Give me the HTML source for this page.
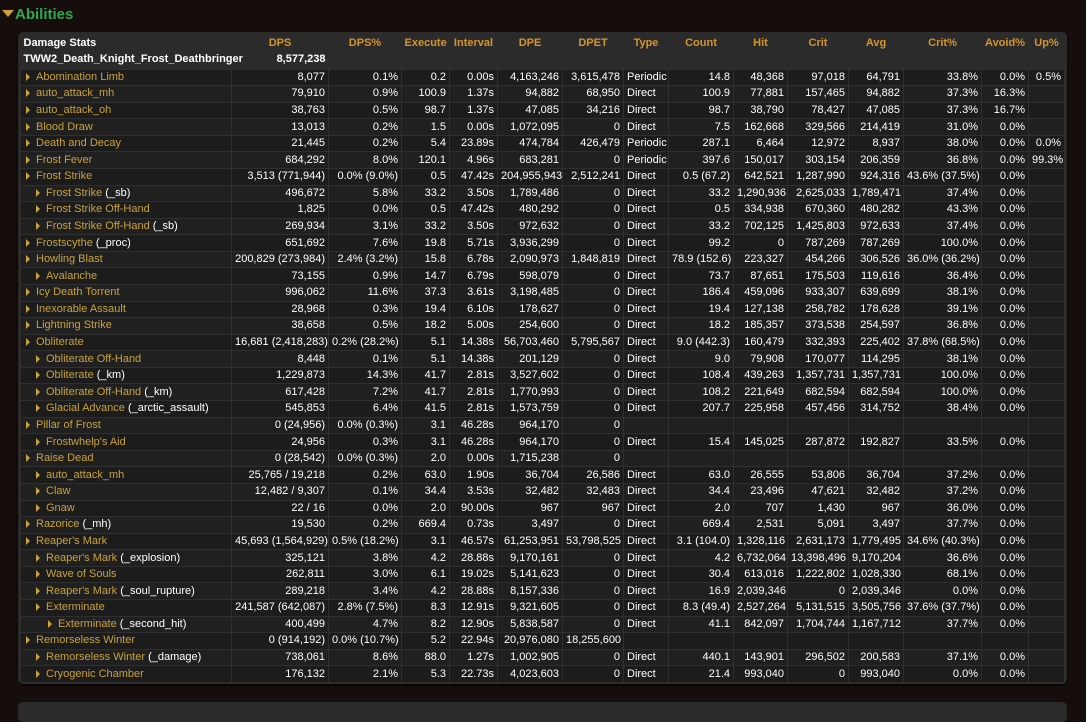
<!DOCTYPE html>
<html><head><meta charset="utf-8"><style>
body{margin:0;background:#160e0c;width:1086px;height:705px;overflow:hidden;font-family:"Liberation Sans",Arial,sans-serif;font-size:11px;color:#fff}
h2{position:absolute;left:2px;top:6px;margin:0;font-size:15px;font-weight:bold;color:#2fa84f}
h2 .tri{display:inline-block;width:0;height:0;border-top:7px solid #c9a23a;border-left:6px solid transparent;border-right:6px solid transparent;margin-right:1px;vertical-align:2px}
.panel{position:absolute;left:18px;top:32px;width:1049px;height:652px;background:#2b2b2b;border-radius:5px;box-shadow:0 1px 2px #000}
.panel2{position:absolute;left:18px;top:702px;width:1049px;height:20px;background:#2b2b2b;border-radius:5px}
table{position:absolute;left:2px;top:3px;border-collapse:collapse;table-layout:fixed;width:1044px}
td,th{padding:0 3px;height:16.58px;line-height:15px;white-space:nowrap;overflow:hidden;text-align:right;box-sizing:border-box}
th{color:#d4952b;font-weight:bold;height:16px;padding-bottom:0}
tbody td{border:1px solid #2f2f2f}
tbody tr:nth-child(odd){background:#1c1c1c}
tbody tr:nth-child(even){background:#202020}
td.n{text-align:left;color:#c9a23a}
td.n i{font-style:normal;color:#fff}
.a{display:inline-block;width:0;height:0;border-left:4px solid #c9a23a;border-top:4px solid transparent;border-bottom:4px solid transparent;margin:0 6px 0 2px;vertical-align:-1px}
.l1{padding-left:13px}.l2{padding-left:25px}
td.t{text-align:left}
.hd td{border:none;font-weight:bold}
</style></head><body>
<h2><span class="tri"></span>Abilities</h2>
<div class="panel">
<table>
<colgroup><col style="width:211px"><col style="width:97px"><col style="width:73px"><col style="width:48px"><col style="width:48px"><col style="width:65px"><col style="width:61px"><col style="width:45px"><col style="width:65px"><col style="width:54px"><col style="width:61px"><col style="width:55px"><col style="width:78px"><col style="width:47px"><col style="width:36px"></colgroup>
<thead>
<tr><th style="text-align:left;color:#fff">Damage Stats</th><th style="text-align:center">DPS</th><th style="text-align:center">DPS%</th><th style="text-align:center">Execute</th><th style="text-align:center">Interval</th><th style="text-align:center">DPE</th><th style="text-align:center">DPET</th><th style="text-align:center">Type</th><th style="text-align:center">Count</th><th style="text-align:center">Hit</th><th style="text-align:center">Crit</th><th style="text-align:center">Avg</th><th style="text-align:center">Crit%</th><th style="text-align:center">Avoid%</th><th style="text-align:center">Up%</th></tr>
<tr class="hd"><td colspan="1" style="text-align:left;padding-left:3px;overflow:visible">TWW2_Death_Knight_Frost_Deathbringer</td><td>8,577,238</td><td colspan="13" style="height:18px"></td></tr>
</thead>
<tbody>
<tr><td class="n"><span class="a"></span>Abomination Limb</td><td>8,077</td><td>0.1%</td><td>0.2</td><td>0.00s</td><td>4,163,246</td><td>3,615,478</td><td class="t">Periodic</td><td>14.8</td><td>48,368</td><td>97,018</td><td>64,791</td><td>33.8%</td><td>0.0%</td><td>0.5%</td></tr>
<tr><td class="n"><span class="a"></span>auto_attack_mh</td><td>79,910</td><td>0.9%</td><td>100.9</td><td>1.37s</td><td>94,882</td><td>68,950</td><td class="t">Direct</td><td>100.9</td><td>77,881</td><td>157,465</td><td>94,882</td><td>37.3%</td><td>16.3%</td><td></td></tr>
<tr><td class="n"><span class="a"></span>auto_attack_oh</td><td>38,763</td><td>0.5%</td><td>98.7</td><td>1.37s</td><td>47,085</td><td>34,216</td><td class="t">Direct</td><td>98.7</td><td>38,790</td><td>78,427</td><td>47,085</td><td>37.3%</td><td>16.7%</td><td></td></tr>
<tr><td class="n"><span class="a"></span>Blood Draw</td><td>13,013</td><td>0.2%</td><td>1.5</td><td>0.00s</td><td>1,072,095</td><td>0</td><td class="t">Direct</td><td>7.5</td><td>162,668</td><td>329,566</td><td>214,419</td><td>31.0%</td><td>0.0%</td><td></td></tr>
<tr><td class="n"><span class="a"></span>Death and Decay</td><td>21,445</td><td>0.2%</td><td>5.4</td><td>23.89s</td><td>474,784</td><td>426,479</td><td class="t">Periodic</td><td>287.1</td><td>6,464</td><td>12,972</td><td>8,937</td><td>38.0%</td><td>0.0%</td><td>0.0%</td></tr>
<tr><td class="n"><span class="a"></span>Frost Fever</td><td>684,292</td><td>8.0%</td><td>120.1</td><td>4.96s</td><td>683,281</td><td>0</td><td class="t">Periodic</td><td>397.6</td><td>150,017</td><td>303,154</td><td>206,359</td><td>36.8%</td><td>0.0%</td><td>99.3%</td></tr>
<tr><td class="n"><span class="a"></span>Frost Strike</td><td>3,513 (771,944)</td><td>0.0% (9.0%)</td><td>0.5</td><td>47.42s</td><td>204,955,943</td><td>2,512,241</td><td class="t">Direct</td><td>0.5 (67.2)</td><td>642,521</td><td>1,287,990</td><td>924,316</td><td>43.6% (37.5%)</td><td>0.0%</td><td></td></tr>
<tr><td class="n l1"><span class="a"></span>Frost Strike <i>(_sb)</i></td><td>496,672</td><td>5.8%</td><td>33.2</td><td>3.50s</td><td>1,789,486</td><td>0</td><td class="t">Direct</td><td>33.2</td><td>1,290,936</td><td>2,625,033</td><td>1,789,471</td><td>37.4%</td><td>0.0%</td><td></td></tr>
<tr><td class="n l1"><span class="a"></span>Frost Strike Off-Hand</td><td>1,825</td><td>0.0%</td><td>0.5</td><td>47.42s</td><td>480,292</td><td>0</td><td class="t">Direct</td><td>0.5</td><td>334,938</td><td>670,360</td><td>480,282</td><td>43.3%</td><td>0.0%</td><td></td></tr>
<tr><td class="n l1"><span class="a"></span>Frost Strike Off-Hand <i>(_sb)</i></td><td>269,934</td><td>3.1%</td><td>33.2</td><td>3.50s</td><td>972,632</td><td>0</td><td class="t">Direct</td><td>33.2</td><td>702,125</td><td>1,425,803</td><td>972,633</td><td>37.4%</td><td>0.0%</td><td></td></tr>
<tr><td class="n"><span class="a"></span>Frostscythe <i>(_proc)</i></td><td>651,692</td><td>7.6%</td><td>19.8</td><td>5.71s</td><td>3,936,299</td><td>0</td><td class="t">Direct</td><td>99.2</td><td>0</td><td>787,269</td><td>787,269</td><td>100.0%</td><td>0.0%</td><td></td></tr>
<tr><td class="n"><span class="a"></span>Howling Blast</td><td>200,829 (273,984)</td><td>2.4% (3.2%)</td><td>15.8</td><td>6.78s</td><td>2,090,973</td><td>1,848,819</td><td class="t">Direct</td><td>78.9 (152.6)</td><td>223,327</td><td>454,266</td><td>306,526</td><td>36.0% (36.2%)</td><td>0.0%</td><td></td></tr>
<tr><td class="n l1"><span class="a"></span>Avalanche</td><td>73,155</td><td>0.9%</td><td>14.7</td><td>6.79s</td><td>598,079</td><td>0</td><td class="t">Direct</td><td>73.7</td><td>87,651</td><td>175,503</td><td>119,616</td><td>36.4%</td><td>0.0%</td><td></td></tr>
<tr><td class="n"><span class="a"></span>Icy Death Torrent</td><td>996,062</td><td>11.6%</td><td>37.3</td><td>3.61s</td><td>3,198,485</td><td>0</td><td class="t">Direct</td><td>186.4</td><td>459,096</td><td>933,307</td><td>639,699</td><td>38.1%</td><td>0.0%</td><td></td></tr>
<tr><td class="n"><span class="a"></span>Inexorable Assault</td><td>28,968</td><td>0.3%</td><td>19.4</td><td>6.10s</td><td>178,627</td><td>0</td><td class="t">Direct</td><td>19.4</td><td>127,138</td><td>258,782</td><td>178,628</td><td>39.1%</td><td>0.0%</td><td></td></tr>
<tr><td class="n"><span class="a"></span>Lightning Strike</td><td>38,658</td><td>0.5%</td><td>18.2</td><td>5.00s</td><td>254,600</td><td>0</td><td class="t">Direct</td><td>18.2</td><td>185,357</td><td>373,538</td><td>254,597</td><td>36.8%</td><td>0.0%</td><td></td></tr>
<tr><td class="n"><span class="a"></span>Obliterate</td><td>16,681 (2,418,283)</td><td>0.2% (28.2%)</td><td>5.1</td><td>14.38s</td><td>56,703,460</td><td>5,795,567</td><td class="t">Direct</td><td>9.0 (442.3)</td><td>160,479</td><td>332,393</td><td>225,402</td><td>37.8% (68.5%)</td><td>0.0%</td><td></td></tr>
<tr><td class="n l1"><span class="a"></span>Obliterate Off-Hand</td><td>8,448</td><td>0.1%</td><td>5.1</td><td>14.38s</td><td>201,129</td><td>0</td><td class="t">Direct</td><td>9.0</td><td>79,908</td><td>170,077</td><td>114,295</td><td>38.1%</td><td>0.0%</td><td></td></tr>
<tr><td class="n l1"><span class="a"></span>Obliterate <i>(_km)</i></td><td>1,229,873</td><td>14.3%</td><td>41.7</td><td>2.81s</td><td>3,527,602</td><td>0</td><td class="t">Direct</td><td>108.4</td><td>439,263</td><td>1,357,731</td><td>1,357,731</td><td>100.0%</td><td>0.0%</td><td></td></tr>
<tr><td class="n l1"><span class="a"></span>Obliterate Off-Hand <i>(_km)</i></td><td>617,428</td><td>7.2%</td><td>41.7</td><td>2.81s</td><td>1,770,993</td><td>0</td><td class="t">Direct</td><td>108.2</td><td>221,649</td><td>682,594</td><td>682,594</td><td>100.0%</td><td>0.0%</td><td></td></tr>
<tr><td class="n l1"><span class="a"></span>Glacial Advance <i>(_arctic_assault)</i></td><td>545,853</td><td>6.4%</td><td>41.5</td><td>2.81s</td><td>1,573,759</td><td>0</td><td class="t">Direct</td><td>207.7</td><td>225,958</td><td>457,456</td><td>314,752</td><td>38.4%</td><td>0.0%</td><td></td></tr>
<tr><td class="n"><span class="a"></span>Pillar of Frost</td><td>0 (24,956)</td><td>0.0% (0.3%)</td><td>3.1</td><td>46.28s</td><td>964,170</td><td>0</td><td class="t"></td><td></td><td></td><td></td><td></td><td></td><td></td><td></td></tr>
<tr><td class="n l1"><span class="a"></span>Frostwhelp's Aid</td><td>24,956</td><td>0.3%</td><td>3.1</td><td>46.28s</td><td>964,170</td><td>0</td><td class="t">Direct</td><td>15.4</td><td>145,025</td><td>287,872</td><td>192,827</td><td>33.5%</td><td>0.0%</td><td></td></tr>
<tr><td class="n"><span class="a"></span>Raise Dead</td><td>0 (28,542)</td><td>0.0% (0.3%)</td><td>2.0</td><td>0.00s</td><td>1,715,238</td><td>0</td><td class="t"></td><td></td><td></td><td></td><td></td><td></td><td></td><td></td></tr>
<tr><td class="n l1"><span class="a"></span>auto_attack_mh</td><td>25,765 / 19,218</td><td>0.2%</td><td>63.0</td><td>1.90s</td><td>36,704</td><td>26,586</td><td class="t">Direct</td><td>63.0</td><td>26,555</td><td>53,806</td><td>36,704</td><td>37.2%</td><td>0.0%</td><td></td></tr>
<tr><td class="n l1"><span class="a"></span>Claw</td><td>12,482 / 9,307</td><td>0.1%</td><td>34.4</td><td>3.53s</td><td>32,482</td><td>32,483</td><td class="t">Direct</td><td>34.4</td><td>23,496</td><td>47,621</td><td>32,482</td><td>37.2%</td><td>0.0%</td><td></td></tr>
<tr><td class="n l1"><span class="a"></span>Gnaw</td><td>22 / 16</td><td>0.0%</td><td>2.0</td><td>90.00s</td><td>967</td><td>967</td><td class="t">Direct</td><td>2.0</td><td>707</td><td>1,430</td><td>967</td><td>36.0%</td><td>0.0%</td><td></td></tr>
<tr><td class="n"><span class="a"></span>Razorice <i>(_mh)</i></td><td>19,530</td><td>0.2%</td><td>669.4</td><td>0.73s</td><td>3,497</td><td>0</td><td class="t">Direct</td><td>669.4</td><td>2,531</td><td>5,091</td><td>3,497</td><td>37.7%</td><td>0.0%</td><td></td></tr>
<tr><td class="n"><span class="a"></span>Reaper's Mark</td><td>45,693 (1,564,929)</td><td>0.5% (18.2%)</td><td>3.1</td><td>46.57s</td><td>61,253,951</td><td>53,798,525</td><td class="t">Direct</td><td>3.1 (104.0)</td><td>1,328,116</td><td>2,631,173</td><td>1,779,495</td><td>34.6% (40.3%)</td><td>0.0%</td><td></td></tr>
<tr><td class="n l1"><span class="a"></span>Reaper's Mark <i>(_explosion)</i></td><td>325,121</td><td>3.8%</td><td>4.2</td><td>28.88s</td><td>9,170,161</td><td>0</td><td class="t">Direct</td><td>4.2</td><td>6,732,064</td><td>13,398,496</td><td>9,170,204</td><td>36.6%</td><td>0.0%</td><td></td></tr>
<tr><td class="n l1"><span class="a"></span>Wave of Souls</td><td>262,811</td><td>3.0%</td><td>6.1</td><td>19.02s</td><td>5,141,623</td><td>0</td><td class="t">Direct</td><td>30.4</td><td>613,016</td><td>1,222,802</td><td>1,028,330</td><td>68.1%</td><td>0.0%</td><td></td></tr>
<tr><td class="n l1"><span class="a"></span>Reaper's Mark <i>(_soul_rupture)</i></td><td>289,218</td><td>3.4%</td><td>4.2</td><td>28.88s</td><td>8,157,336</td><td>0</td><td class="t">Direct</td><td>16.9</td><td>2,039,346</td><td>0</td><td>2,039,346</td><td>0.0%</td><td>0.0%</td><td></td></tr>
<tr><td class="n l1"><span class="a"></span>Exterminate</td><td>241,587 (642,087)</td><td>2.8% (7.5%)</td><td>8.3</td><td>12.91s</td><td>9,321,605</td><td>0</td><td class="t">Direct</td><td>8.3 (49.4)</td><td>2,527,264</td><td>5,131,515</td><td>3,505,756</td><td>37.6% (37.7%)</td><td>0.0%</td><td></td></tr>
<tr><td class="n l2"><span class="a"></span>Exterminate <i>(_second_hit)</i></td><td>400,499</td><td>4.7%</td><td>8.2</td><td>12.90s</td><td>5,838,587</td><td>0</td><td class="t">Direct</td><td>41.1</td><td>842,097</td><td>1,704,744</td><td>1,167,712</td><td>37.7%</td><td>0.0%</td><td></td></tr>
<tr><td class="n"><span class="a"></span>Remorseless Winter</td><td>0 (914,192)</td><td>0.0% (10.7%)</td><td>5.2</td><td>22.94s</td><td>20,976,080</td><td>18,255,600</td><td class="t"></td><td></td><td></td><td></td><td></td><td></td><td></td><td></td></tr>
<tr><td class="n l1"><span class="a"></span>Remorseless Winter <i>(_damage)</i></td><td>738,061</td><td>8.6%</td><td>88.0</td><td>1.27s</td><td>1,002,905</td><td>0</td><td class="t">Direct</td><td>440.1</td><td>143,901</td><td>296,502</td><td>200,583</td><td>37.1%</td><td>0.0%</td><td></td></tr>
<tr><td class="n l1"><span class="a"></span>Cryogenic Chamber</td><td>176,132</td><td>2.1%</td><td>5.3</td><td>22.73s</td><td>4,023,603</td><td>0</td><td class="t">Direct</td><td>21.4</td><td>993,040</td><td>0</td><td>993,040</td><td>0.0%</td><td>0.0%</td><td></td></tr>
</tbody></table>
</div>
<div class="panel2"></div>
</body></html>
